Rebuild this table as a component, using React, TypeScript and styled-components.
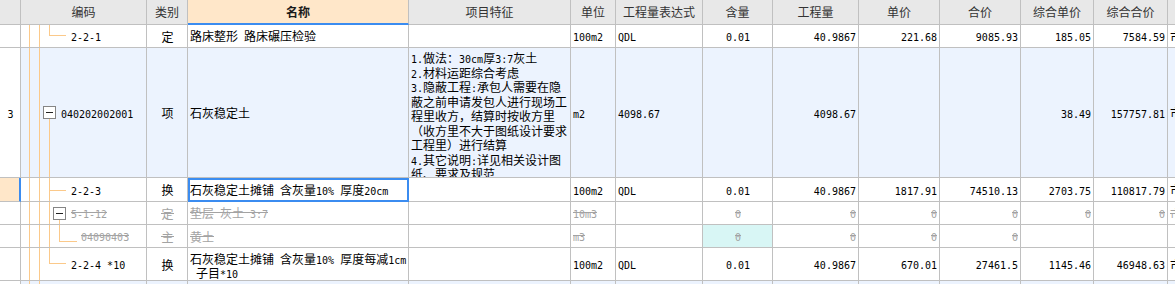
import React from "react";
import styled, { createGlobalStyle, css } from "styled-components";

const GlobalStyle = createGlobalStyle`
  html, body { margin: 0; padding: 0; background: #fff; overflow: hidden; }
  body {
    font-family: "Noto Sans CJK SC", "Noto Sans", sans-serif;
    font-size: 12px;
    color: #000;
  }
`;

const COLS =
  "21px 126px 41px 221px 162px 45px 87px 70px 86px 81px 81px 73px 74px 60px";

const BLUE = "#3b8cf0";
const GRID = "#c0c0c0";
const TREE = "#fbc98a";

const Sheet = styled.div`
  width: 1175px;
  height: 284px;
  overflow: hidden;
`;

const Row = styled.div<{ $h: number; $tint?: string }>`
  display: grid;
  grid-template-columns: ${COLS};
  width: 1228px;
  height: ${(p) => p.$h}px;
  ${(p) =>
    p.$tint &&
    css`
      & > *:not(:first-child) {
        background: ${p.$tint};
      }
    `}
`;

const HeaderCell = styled.div<{ $accent?: boolean }>`
  box-sizing: border-box;
  display: flex;
  align-items: center;
  justify-content: center;
  background: ${(p) => (p.$accent ? "#ffe7c9" : "#e8e8e8")};
  border-right: 1px solid ${GRID};
  border-bottom: ${(p) => (p.$accent ? `2px solid ${BLUE}` : `1px solid ${GRID}`)};
  color: ${(p) => (p.$accent ? "#1a1a1a" : "#333")};
  font-weight: ${(p) => (p.$accent ? 700 : 400)};
  font-size: 12px;
  line-height: 14px;
  padding-top: ${(p) => (p.$accent ? 1 : 0)}px;
  white-space: nowrap;
  overflow: hidden;
`;

type Align = "left" | "center" | "right";

const Cell = styled.div<{
  $align?: Align;
  $bg?: string;
  $selected?: boolean;
  $marker?: boolean;
  $top?: boolean;
  $padTop?: number;
}>`
  box-sizing: border-box;
  min-width: 0;
  display: flex;
  flex-direction: ${(p) => (p.$top ? "column" : "row")};
  align-items: ${(p) => (p.$top ? "flex-start" : "center")};
  justify-content: ${(p) =>
    p.$top
      ? "flex-start"
      : p.$align === "center"
      ? "center"
      : p.$align === "right"
      ? "flex-end"
      : "flex-start"};
  padding: ${(p) => p.$padTop ?? 0}px ${(p) => (p.$align === "right" ? 2 : 1)}px 0 2px;
  border-right: ${(p) => (p.$marker ? `2px solid ${BLUE}` : `1px solid ${GRID}`)};
  border-bottom: 1px solid ${GRID};
  background: ${(p) => p.$bg ?? "transparent"};
  overflow: hidden;
  white-space: pre;
  line-height: 13px;
  ${(p) =>
    p.$selected &&
    css`
      outline: 2px solid ${BLUE};
      outline-offset: -2px;
    `}
`;

const CodeCell = styled(Cell)`
  padding: 0;
  align-items: stretch;
`;

const Text = styled.span<{ $muted?: boolean }>`
  display: block;
  position: relative;
  color: ${(p) => (p.$muted ? "#a3a3a3" : "#000")};
  line-height: 13px;
  white-space: pre;
  ${(p) =>
    p.$muted &&
    css`
      &::after {
        content: "";
        position: absolute;
        left: 0;
        right: 0;
        top: 6px;
        height: 1px;
        background: #a3a3a3;
      }
    `}
`;

const FeatureLine = styled.span`
  display: block;
  flex: none;
  height: 14.5px;
  line-height: 14.5px;
  white-space: pre;
`;

const CodeText = styled(Text)`
  align-self: center;
`;

const Mono = styled.span`
  font-family: "DejaVu Sans Mono", "Liberation Mono", monospace;
  font-size: 10px;
  line-height: 10px;
`;

const Gutter = styled.svg`
  flex: none;
  display: block;
`;

function Mixed({ s }: { s: string }) {
  const parts = s.split(/([\x20-\x7e]+)/).filter((p) => p.length > 0);
  return (
    <>
      {parts.map((p, i) =>
        /^[\x20-\x7e]+$/.test(p) ? (
          <Mono key={i}>{p}</Mono>
        ) : (
          <React.Fragment key={i}>{p}</React.Fragment>
        )
      )}
    </>
  );
}

type Seg = [number, number, number];
type TreeSpec = {
  w: number;
  h: number;
  v?: Seg[]; // [x, y1, y2]
  hz?: Seg[]; // [y, x1, x2]
  box?: [number, number][]; // [x, y] of top-left (half-pixel)
};

function Tree({ w, h, v = [], hz = [], box = [] }: TreeSpec) {
  return (
    <Gutter width={w} height={h} viewBox={`0 0 ${w} ${h}`}>
      {v.map(([x, y1, y2], i) => (
        <line key={"v" + i} x1={x} x2={x} y1={y1} y2={y2} stroke={TREE} strokeWidth={1} />
      ))}
      {hz.map(([y, x1, x2], i) => (
        <line key={"h" + i} x1={x1} x2={x2} y1={y} y2={y} stroke={TREE} strokeWidth={1} />
      ))}
      {box.map(([x, y], i) => (
        <g key={"b" + i}>
          <rect x={x} y={y} width={12} height={12} fill="#fff" stroke="#858585" strokeWidth={1} />
          <line x1={x + 2.5} x2={x + 9.5} y1={y + 6} y2={y + 6} stroke="#222" strokeWidth={1} />
        </g>
      ))}
    </Gutter>
  );
}

const headers: { label: string; accent?: boolean }[] = [
  { label: "" },
  { label: "编码" },
  { label: "类别" },
  { label: "名称", accent: true },
  { label: "项目特征" },
  { label: "单位" },
  { label: "工程量表达式" },
  { label: "含量" },
  { label: "工程量" },
  { label: "单价" },
  { label: "合价" },
  { label: "综合单价" },
  { label: "综合合价" },
  { label: "" },
];

const features = [
  "1.做法：30cm厚3:7灰土",
  "2.材料运距综合考虑",
  "3.隐蔽工程:承包人需要在隐",
  "蔽之前申请发包人进行现场工",
  "程里收方，结算时按收方里",
  "（收方里不大于图纸设计要求",
  "工程里）进行结算",
  "4.其它说明:详见相关设计图",
  "纸、要求及规范.",
];

type Line = {
  h: number;
  tint?: string;
  num?: string;
  numBg?: string;
  marker?: boolean;
  tree: TreeSpec;
  code: string;
  kind: string;
  name: string;
  nameSelected?: boolean;
  namePadTop?: number;
  unit?: string;
  expr?: string;
  ratio?: string;
  ratioBg?: string;
  qty?: string;
  price?: string;
  total?: string;
  cprice?: string;
  ctotal?: string;
  tail?: string;
  muted?: boolean;
  feature?: boolean;
};

const lines: Line[] = [
  {
    h: 23,
    tree: { w: 50, h: 22, v: [[8.5, 0, 22], [18.5, 0, 22], [28.5, 0, 10.5]], hz: [[10.5, 28, 45]] },
    code: "2-2-1",
    kind: "定",
    name: "路床整形 路床碾压检验",
    unit: "100m2",
    expr: "QDL",
    ratio: "0.01",
    qty: "40.9867",
    price: "221.68",
    total: "9085.93",
    cprice: "185.05",
    ctotal: "7584.59",
    tail: "市",
  },
  {
    h: 130,
    tint: "#ecf3fe",
    num: "3",
    tree: { w: 40, h: 129, v: [[8.5, 0, 129], [18.5, 0, 129], [28.5, 71, 129]], box: [[22.5, 58.5]] },
    code: "040202002001",
    kind: "项",
    name: "石灰稳定土",
    feature: true,
    unit: "m2",
    expr: "4098.67",
    qty: "4098.67",
    cprice: "38.49",
    ctotal: "157757.81",
    tail: "市",
  },
  {
    h: 24,
    numBg: "#ffe7c9",
    marker: true,
    tree: { w: 50, h: 23, v: [[8.5, 0, 23], [18.5, 0, 23], [28.5, 0, 23]], hz: [[12.5, 28, 45]] },
    code: "2-2-3",
    kind: "换",
    name: "石灰稳定土摊铺 含灰量10% 厚度20cm",
    nameSelected: true,
    unit: "100m2",
    expr: "QDL",
    ratio: "0.01",
    qty: "40.9867",
    price: "1817.91",
    total: "74510.13",
    cprice: "2703.75",
    ctotal: "110817.79",
    tail: "市",
  },
  {
    h: 23,
    muted: true,
    tree: {
      w: 50,
      h: 22,
      v: [[8.5, 0, 22], [18.5, 0, 22], [28.5, 0, 22], [38.5, 17, 22]],
      box: [[32.5, 5.5]],
    },
    code: "5-1-12",
    kind: "定",
    name: "垫层 灰土 3:7",
    unit: "10m3",
    ratio: "0",
    qty: "0",
    price: "0",
    total: "0",
    cprice: "0",
    ctotal: "0",
    tail: "市",
  },
  {
    h: 23,
    muted: true,
    tree: {
      w: 60,
      h: 22,
      v: [[8.5, 0, 22], [18.5, 0, 22], [28.5, 0, 22], [38.5, 0, 16.5]],
      hz: [[16.5, 38, 56]],
    },
    code: "04090403",
    kind: "主",
    name: "黄土",
    unit: "m3",
    ratio: "0",
    ratioBg: "#d8f6f5",
    qty: "0",
    price: "0",
    total: "0",
  },
  {
    h: 33,
    tree: { w: 50, h: 32, v: [[8.5, 0, 32], [18.5, 0, 32], [28.5, 0, 15.5]], hz: [[15.5, 28, 45]] },
    code: "2-2-4 *10",
    kind: "换",
    name: "石灰稳定土摊铺 含灰量10% 厚度每减1cm\n 子目*10",
    namePadTop: 3,
    unit: "100m2",
    expr: "QDL",
    ratio: "0.01",
    qty: "40.9867",
    price: "670.01",
    total: "27461.5",
    cprice: "1145.46",
    ctotal: "46948.63",
    tail: "市",
  },
  {
    h: 23,
    tint: "#ecf3fe",
    tree: { w: 50, h: 22, v: [[8.5, 0, 22], [18.5, 0, 22]] },
    code: "",
    kind: "",
    name: "",
  },
];

function Val({ s, muted }: { s?: string; muted?: boolean }) {
  if (!s) return null;
  return (
    <Text $muted={muted}>
      <Mixed s={s} />
    </Text>
  );
}

function DataRow({ l }: { l: Line }) {
  const m = l.muted;
  return (
    <Row $h={l.h} $tint={l.tint}>
      <Cell $align="center" $bg={l.numBg} $marker={l.marker}>
        <Val s={l.num} />
      </Cell>
      <CodeCell>
        <Tree {...l.tree} />
        {l.code && (
          <CodeText $muted={m}>
            <Mono>{l.code}</Mono>
          </CodeText>
        )}
      </CodeCell>
      <Cell $align="center">
        <Val s={l.kind} muted={m} />
      </Cell>
      <Cell $selected={l.nameSelected} $padTop={l.namePadTop}>
        <Val s={l.name} muted={m} />
      </Cell>
      {l.feature ? (
        <Cell $top $padTop={3}>
          {features.map((f, i) => (
            <FeatureLine key={i}>
              <Mixed s={f} />
            </FeatureLine>
          ))}
        </Cell>
      ) : (
        <Cell />
      )}
      <Cell>
        <Val s={l.unit} muted={m} />
      </Cell>
      <Cell>
        <Val s={l.expr} muted={m} />
      </Cell>
      <Cell $align="center" $bg={l.ratioBg}>
        <Val s={l.ratio} muted={m} />
      </Cell>
      <Cell $align="right">
        <Val s={l.qty} muted={m} />
      </Cell>
      <Cell $align="right">
        <Val s={l.price} muted={m} />
      </Cell>
      <Cell $align="right">
        <Val s={l.total} muted={m} />
      </Cell>
      <Cell $align="right">
        <Val s={l.cprice} muted={m} />
      </Cell>
      <Cell $align="right">
        <Val s={l.ctotal} muted={m} />
      </Cell>
      <Cell>
        <Val s={l.tail} muted={m} />
      </Cell>
    </Row>
  );
}

export default function App() {
  return (
    <>
      <GlobalStyle />
      <Sheet>
        <Row $h={25}>
          {headers.map((h, i) => (
            <HeaderCell key={i} $accent={h.accent}>
              {h.label}
            </HeaderCell>
          ))}
        </Row>
        {lines.map((l, i) => (
          <DataRow key={i} l={l} />
        ))}
      </Sheet>
    </>
  );
}
